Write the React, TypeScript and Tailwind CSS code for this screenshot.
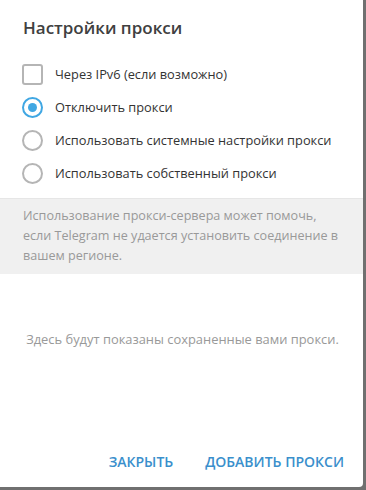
import React, { useState } from "react";

const options = [
  { id: "off", label: "Отключить прокси" },
  { id: "system", label: "Использовать системные настройки прокси" },
  { id: "custom", label: "Использовать собственный прокси" },
];

export default function App() {
  const [ipv6, setIpv6] = useState(false);
  const [mode, setMode] = useState("off");

  return (
    <div
      className="w-[366px] h-[490px] bg-[#707070] overflow-hidden"
      style={{ fontFamily: '"Open Sans", "Noto Sans", sans-serif' }}
    >
      <div className="w-[363px] h-[487px] bg-white rounded-br-[4px] flex flex-col">
        {/* Header */}
        <div className="pt-[18px] px-[23px] text-[17px] leading-[20px] font-semibold text-[#404040]">
          Настройки прокси
        </div>

        {/* Options */}
        <div className="mt-[20px] flex flex-col">
          <button
            onClick={() => setIpv6(!ipv6)}
            className="h-[33px] flex items-center px-[22px] gap-[12px] text-left"
          >
            <span
              className={`w-[21px] h-[21px] rounded-[3px] border-2 flex items-center justify-center ${
                ipv6 ? "border-[#40a7e3] bg-[#40a7e3]" : "border-[#b5b5b5] bg-white"
              }`}
            >
              {ipv6 && (
                <svg width="12" height="12" viewBox="0 0 12 12" fill="none">
                  <path d="M2 6.5 5 9.5 10 3" stroke="white" strokeWidth="2" />
                </svg>
              )}
            </span>
            <span className="text-[12.8px] text-[#333]">Через IPv6 (если возможно)</span>
          </button>
          {options.map((o) => (
            <button
              key={o.id}
              onClick={() => setMode(o.id)}
              className="h-[33px] flex items-center px-[22px] gap-[12px] text-left"
            >
              <span
                className={`w-[21px] h-[21px] rounded-full border-2 flex items-center justify-center ${
                  mode === o.id ? "border-[#40a7e3]" : "border-[#b5b5b5]"
                }`}
              >
                {mode === o.id && <span className="w-[9px] h-[9px] rounded-full bg-[#40a7e3]" />}
              </span>
              <span className="text-[12.8px] text-[#333]">{o.label}</span>
            </button>
          ))}
        </div>

        {/* About */}
        <div className="mt-[8px] bg-[#f0f0f0] border-t border-[#e6e6e6] px-[23px] pt-[7px] pb-[8px] text-[12.6px] leading-[20px] text-[#999]">
          Использование прокси-сервера может помочь, если Telegram не удается установить соединение в вашем регионе.
        </div>

        {/* Empty list */}
        <div className="mt-[55px] pl-[2px] text-center text-[12.9px] leading-[20px] text-[#999]">
          Здесь будут показаны сохраненные вами прокси.
        </div>

        {/* Buttons */}
        <div className="mt-auto mb-[8px] pr-[9px] flex justify-end gap-[12px]">
          <button className="h-[36px] px-[10px] text-[14px] font-semibold uppercase text-[#3a8fcc]">
            Закрыть
          </button>
          <button className="h-[36px] px-[10px] text-[14px] font-semibold uppercase text-[#3a8fcc]">
            Добавить прокси
          </button>
        </div>
      </div>
    </div>
  );
}
